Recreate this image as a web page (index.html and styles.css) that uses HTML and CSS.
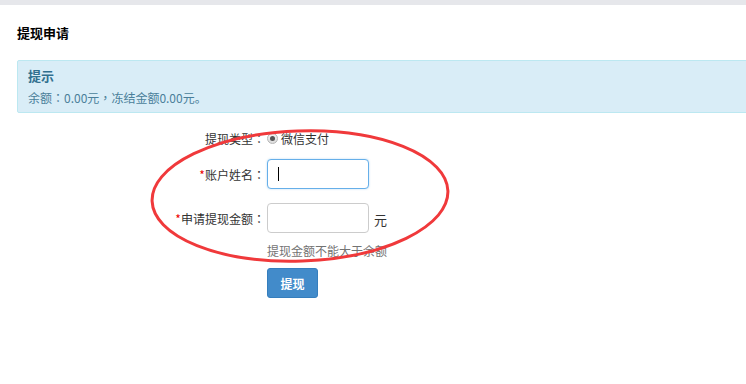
FILE: index.html
```html
<!DOCTYPE html>
<html lang="zh-CN">
<head>
<meta charset="utf-8">
<link rel="stylesheet" href="styles.css">
</head>
<body>
<div class="topbar"></div>
<div class="page">
  <h3 class="title">提现申请</h3>
  <div class="alert">
    <div class="alert-title">提示</div>
    <div class="alert-text">余额<span class="p" lang="zh-TW">：</span>0.00元<span class="p" lang="zh-TW">，</span>冻结金额0.00元。</div>
  </div>
  <div class="form">
    <div class="row row-radio">
      <label class="lbl">提现类型<span class="p" lang="zh-TW">：</span></label>
      <div class="ctl"><span class="radio"><span class="dot"></span></span><span>微信支付</span></div>
    </div>
    <div class="row">
      <label class="lbl"><span class="req">*</span>账户姓名<span class="p" lang="zh-TW">：</span></label>
      <div class="ctl"><span class="inwrap"><input class="inp focus" type="text"><span class="caret"></span></span></div>
    </div>
    <div class="row">
      <label class="lbl"><span class="req">*</span>申请提现金额<span class="p" lang="zh-TW">：</span></label>
      <div class="ctl"><input class="inp" type="text"><span class="unit">元</span></div>
    </div>
    <div class="row row-help">
      <span class="lbl"></span>
      <div class="ctl help">提现金额不能大于余额</div>
    </div>
    <div class="row row-btn">
      <span class="lbl"></span>
      <div class="ctl"><button class="btn">提现</button></div>
    </div>
  </div>
  <svg class="annot" width="320" height="150" viewBox="0 0 320 150">
    <ellipse cx="160" cy="74" rx="148" ry="65" fill="none" stroke="#f0393b" stroke-width="3" transform="rotate(-2 160 74)"/>
  </svg>
</div>
</body>
</html>
```
FILE: styles.css
```css
html, body {
  margin: 0;
  padding: 0;
  background: #fff;
  overflow: hidden;
}
body {
  font-family: "Microsoft YaHei", "Noto Sans CJK SC", "Liberation Sans", sans-serif;
  font-size: 12px;
  color: #333;
}
.p {
  font-family: "Noto Sans CJK TC", "Noto Sans CJK SC", sans-serif;
}
.topbar {
  height: 5px;
  background: #e6e7eb;
}
.page {
  position: relative;
  padding: 0 0 0 17px;
}
.title {
  margin: 0;
  padding-top: 19px;
  height: 36px;
  box-sizing: border-box;
  font-size: 13px;
  font-weight: bold;
  line-height: 18px;
  color: #000;
}
.alert {
  margin-top: 19px;
  width: 760px;
  height: 53px;
  box-sizing: border-box;
  background: #d9edf7;
  border: 1px solid #bce8f1;
  border-radius: 2px;
  padding: 6px 10px 0 10px;
  color: #31708f;
}
.alert-title {
  font-size: 13px;
  font-weight: bold;
  line-height: 18px;
}
.alert-text {
  margin-top: 4px;
  font-size: 12px;
  line-height: 17px;
  color: #4a7f9a;
}
.form {
  margin-top: 16px;
}
.row {
  display: flex;
  align-items: center;
  margin-bottom: 14px;
}
.lbl {
  width: 250px;
  flex: none;
  text-align: right;
  padding-right: 2px;
  box-sizing: border-box;
  color: #333;
  font-size: 12px;
}
.req {
  color: #e00;
}
.ctl {
  display: flex;
  align-items: center;
}
.row-radio {
  height: 18px;
  margin-bottom: 12px;
}
.radio {
  width: 11px;
  height: 11px;
  border-radius: 50%;
  border: 1px solid #b5b5b5;
  background: linear-gradient(#f4f4f4, #dcdcdc);
  box-sizing: border-box;
  display: flex;
  align-items: center;
  justify-content: center;
  margin-right: 3px;
}
.dot {
  width: 5px;
  height: 5px;
  border-radius: 50%;
  background: #555;
}
.inwrap {
  position: relative;
  display: flex;
}
.inp {
  width: 102px;
  height: 30px;
  box-sizing: border-box;
  border: 1px solid #ccc;
  border-radius: 4px;
  padding: 4px 8px;
  font-family: inherit;
  font-size: 12px;
  outline: none;
  margin: 0;
}
.inp.focus {
  border-color: #66afe9;
  box-shadow: 0 0 2px rgba(102, 175, 233, 0.5);
}
.caret {
  position: absolute;
  left: 11px;
  top: 8px;
  width: 1px;
  height: 14px;
  background: #000;
}
.unit {
  margin-left: 5px;
  font-size: 13px;
  color: #333;
  padding-top: 2px;
}
.row-help {
  margin-top: -4px;
  margin-bottom: 9px;
}
.help {
  color: #737373;
  font-size: 12px;
  line-height: 16px;
}
.btn {
  width: 51px;
  height: 30px;
  background: #428bca;
  border: 1px solid #357ebd;
  border-radius: 3px;
  color: #fff;
  font-family: inherit;
  font-size: 12px;
  font-weight: bold;
  padding: 0;
}
.annot {
  position: absolute;
  left: 140px;
  top: 117px;
  pointer-events: none;
}
```
